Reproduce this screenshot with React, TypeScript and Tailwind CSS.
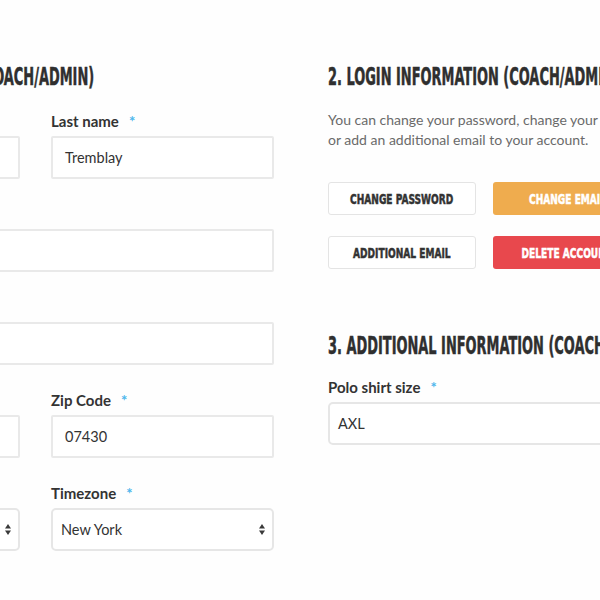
import React from "react";

const HEAD =
  "font-['DejaVu_Sans_Condensed','DejaVu_Sans',sans-serif] font-bold [-webkit-text-stroke:0.5px_currentcolor]";

function Heading({ text }: { text: string }) {
  return (
    <div
      className={`${HEAD} text-[#2f2f2f] text-[24px] leading-[28px] whitespace-nowrap origin-left scale-x-60`}
    >
      {text}
    </div>
  );
}

function Label({ text }: { text: string }) {
  return (
    <div className="h-[20px] leading-[20px] text-[15px] font-bold text-[#333] whitespace-nowrap">
      {text}
      <span className="ml-[10px] text-[#4db6ec]">*</span>
    </div>
  );
}

function Arrows() {
  return (
    <svg width="6" height="11" viewBox="0 0 6 11" className="shrink-0">
      <path d="M0 4.5 L3 0 L6 4.5 Z" fill="#3a3a3a" />
      <path d="M0 6.5 L3 11 L6 6.5 Z" fill="#3a3a3a" />
    </svg>
  );
}

function TextField({ label, value }: { label: string; value?: string }) {
  return (
    <div>
      <Label text={label} />
      <div className="mt-[5px] h-[43px] border-2 border-[#e9e9e9] rounded-[2px] pl-[12px] flex items-center text-[14.5px] text-[#333] bg-white">
        {value}
      </div>
    </div>
  );
}

function SelectField({ label, value }: { label: string; value: string }) {
  return (
    <div>
      <Label text={label} />
      <div className="mt-[5px] h-[43px] border-2 border-[#e6e6e6] rounded-[5px] pl-[8px] pr-[7px] flex items-center justify-between text-[14.5px] text-[#333] bg-white">
        <span>{value}</span>
        <Arrows />
      </div>
    </div>
  );
}

function Button({
  text,
  variant,
}: {
  text: string;
  variant: "light" | "orange" | "red";
}) {
  const cls =
    variant === "light"
      ? "bg-white border border-[#e4e4e4]"
      : variant === "orange"
      ? "bg-[#efac4e]"
      : "bg-[#e8484d]";
  const txt = variant === "light" ? "text-[#333]" : "text-white";
  return (
    <div
      className={`h-[33px] w-[148px] rounded-[3px] flex items-center justify-center ${cls}`}
    >
      <span
        className={`inline-block whitespace-nowrap scale-x-[0.72] ${HEAD} ${txt} text-[14px] leading-[16px]`}
      >
        {text}
      </span>
    </div>
  );
}

export default function App() {
  return (
    <div className="w-[600px] h-[600px] overflow-hidden bg-[#fefefe] font-['Lato',sans-serif]">
      <div className="ml-[-203px] pt-[63px] flex gap-[54px]">
        {/* Column 1 */}
        <div className="w-[477px] shrink-0">
          <Heading text="1. COACH INFORMATION (COACH/ADMIN)" />
          <div className="mt-[20px] flex flex-col gap-[25px]">
            <div className="grid grid-cols-2 gap-x-[31px]">
              <TextField label="First name" value="Marc" />
              <TextField label="Last name" value="Tremblay" />
            </div>
            <TextField label="Email" />
            <TextField label="Address" />
            <div className="grid grid-cols-2 gap-x-[31px]">
              <TextField label="City" />
              <TextField label="Zip Code" value="07430" />
            </div>
            <div className="grid grid-cols-2 gap-x-[31px]">
              <SelectField label="Country" value="United States" />
              <SelectField label="Timezone" value="New York" />
            </div>
          </div>
        </div>

        {/* Column 2 */}
        <div className="w-[477px] shrink-0">
          <Heading text="2. LOGIN INFORMATION (COACH/ADMIN)" />
          <p className="mt-[19px] text-[14px] leading-[20px] text-[#6a6a6a]">
            You can change your password, change your email
            <br />
            or add an additional email to your account.
          </p>
          <div className="mt-[32px] grid grid-cols-[148px_148px] gap-x-[17px] gap-y-[21px]">
            <Button text="CHANGE PASSWORD" variant="light" />
            <Button text="CHANGE EMAIL" variant="orange" />
            <Button text="ADDITIONAL EMAIL" variant="light" />
            <Button text="DELETE ACCOUNT" variant="red" />
          </div>
          <div className="mt-[63px]">
            <Heading text="3. ADDITIONAL INFORMATION (COACH/ADMIN)" />
          </div>
          <div className="mt-[17px]">
            <SelectField label="Polo shirt size" value="AXL" />
          </div>
        </div>
      </div>
    </div>
  );
}
